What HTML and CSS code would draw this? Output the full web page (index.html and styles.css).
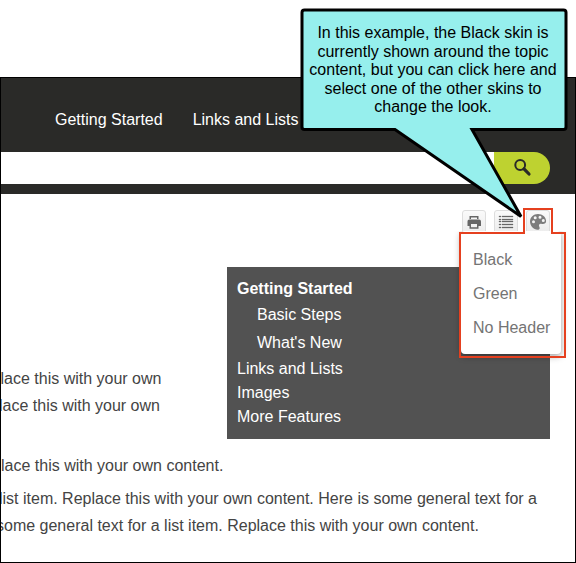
FILE: index.html
```html
<!DOCTYPE html>
<html lang="en">
<head>
<meta charset="utf-8">
<title>Skins</title>
<link rel="stylesheet" href="styles.css">
</head>
<body>
<div class="window">
  <header class="header">
    <nav class="nav"><a>Getting Started</a><a>Links and Lists</a></nav>
    <div class="search">
      <div class="search-field"></div>
      <button class="search-button" aria-label="Search">
        <svg width="20" height="20" viewBox="0 0 20 20"><circle cx="7.2" cy="7" r="4.900" fill="none" stroke="#2a2a28" stroke-width="2"/><path d="M11 10.800 16 16" stroke="#2a2a28" stroke-width="3.200" stroke-linecap="round"/></svg>
      </button>
    </div>
  </header>
  <div class="toolbar">
    <button class="tool" aria-label="Print"><svg width="22" height="22" viewBox="0 0 22 22"><path fill="#666" fill-rule="evenodd" d="M6.500 5h9v4h-9zM8 6.500V9h6V6.500zM6 8.500h10a2 2 0 0 1 2 2V15h-2.500v2.800h-9V15H4.500v-4.500A1.800 1.800 0 0 1 6 8.500zM8 13v3.300h6V13z"/></svg></button>
    <button class="tool" aria-label="Expand all"><svg width="22" height="22" viewBox="0 0 22 22"><path fill="#666" d="M4 5h2v1H4zM7 5h11v1H7zM4 8h2v1H4zM7 8h11v1H7zM4 10h2v1H4zM7 10h11v1H7zM4 13h2v1H4zM7 13h11v1H7zM4 16h2v1H4zM7 16h11v1H7z" stroke="#666" stroke-width=".3"/></svg></button>
    <button class="tool" aria-label="Select skin"><svg width="22" height="22" viewBox="0 0 22 22"><path fill="#7d7d7d" fill-rule="evenodd" d="M11 3C6.500 3 3 6.400 3 10.500c0 4.300 3.600 8.200 7.600 8.200 3 0 2-2.500 1.500-3.500-.6-1.600.5-2.700 2-2.500 2.300.5 5 .3 5-2.700C19 6 15.500 3 11 3zM6.500 9.200a1.500 1.500 0 1 1 0 3 1.500 1.500 0 0 1 0-3zM8.200 5.200a1.500 1.500 0 1 1 0 3 1.500 1.500 0 0 1 0-3zM13 4.800a1.500 1.500 0 1 1 0 3 1.500 1.500 0 0 1 0-3zM16.300 8a1.500 1.500 0 1 1 0 3 1.500 1.500 0 0 1 0-3z"/></svg></button>
  </div>
  <main class="content">
    <aside class="contents">
      <b>Getting Started</b>
      <span class="sub">Basic Steps</span>
      <span class="sub">What's New</span>
      <span>Links and Lists</span>
      <span>Images</span>
      <span>More Features</span>
    </aside>
    <div class="topic">
      <p class="intro">lace this with your own<br><span class="nudge">lace this with your own</span></p>
      <p class="middle">lace this with your own content.</p>
      <p class="last">list item. Replace this with your own content. Here is some general text for a<br><span class="nudge-more">some general text for a list item. Replace this with your own content.</span></p>
    </div>
  </main>
</div>
<div class="skin-menu"><a>Black</a><a>Green</a><a>No Header</a></div>
<svg class="outline" width="576" height="563" viewBox="0 0 576 563" fill="none">
  <path d="M460 233H524V209H552V233H565V357H460Z" stroke="#e5401f" stroke-width="2"/>
  <path d="M304.500 10H563.500Q566 10 566 12.500V127Q566 129.500 563.500 129.500H472L521 216.500L395 129.500H304.500Q302 129.500 302 127V12.500Q302 10 304.500 10Z" fill="#96efed" stroke="#000" stroke-width="3"/>
</svg>
<div class="callout">In this example, the Black skin is<br>currently shown around the topic<br>content, but you can click here and<br>select one of the other skins to<br>change the look.</div>
</body>
</html>
```
FILE: styles.css
```css
* { box-sizing: border-box; }
body { margin: 0; padding-top: 77px; height: 563px; background: #fff; color: #444; font: 16px "Liberation Sans", Arial, sans-serif; position: relative; overflow: hidden; }
.window { height: 486px; border: 1px solid #000; overflow: hidden; }
.header { height: 116px; background: #2a2a28; display: flex; flex-direction: column; }
.nav { height: 74px; padding: 33px 0 0 54px; display: flex; gap: 30px; color: #fff; line-height: 18px; }
.search { height: 32px; display: flex; padding-right: 25px; }
.search-field { flex: 1; background: #fff; }
.search-button { width: 56px; border: 0; border-radius: 0 16px 16px 0; background: #bed230; padding: 0 0 1px 19px; display: flex; align-items: center; }
button svg { display: block; flex: none; }
.toolbar { height: 73px; display: flex; justify-content: flex-end; gap: 8px; padding: 16px 25px 0 0; }
.tool { width: 24px; height: 24px; padding: 0; border: 1px solid #ddd; border-radius: 3px; background: linear-gradient(#fafafa, #ececec); }
.contents { float: right; width: 323px; height: 172px; margin-right: 25px; padding: 10px; background: #525252; color: #fff; display: flex; flex-direction: column; line-height: 24px; }
.contents .sub { padding-left: 20px; line-height: 28px; }
.topic { padding-top: 98px; line-height: 27px; white-space: nowrap; }
.topic p { margin: 0; }
.topic .intro { margin-left: -0.5px; }
.nudge { margin-left: -1.5px; }
.nudge-more { margin-left: -3px; }
.topic .middle { margin-top: 33px; }
.topic .last { margin-top: 6px; margin-left: -2px; }
.skin-menu { position: absolute; left: 461px; top: 231px; width: 100px; height: 123px; padding: 12px 0 0 12px; background: #fff; border-radius: 4px; box-shadow: 0 2px 7px #0006; display: flex; flex-direction: column; line-height: 34px; color: #747474; white-space: nowrap; clip-path: inset(0 -12px -12px -12px); }
.outline { position: absolute; left: 0; top: 0; }
.callout { position: absolute; left: 301px; top: 24px; width: 264px; text-align: center; color: #000; line-height: 18.600px; white-space: nowrap; }
```
